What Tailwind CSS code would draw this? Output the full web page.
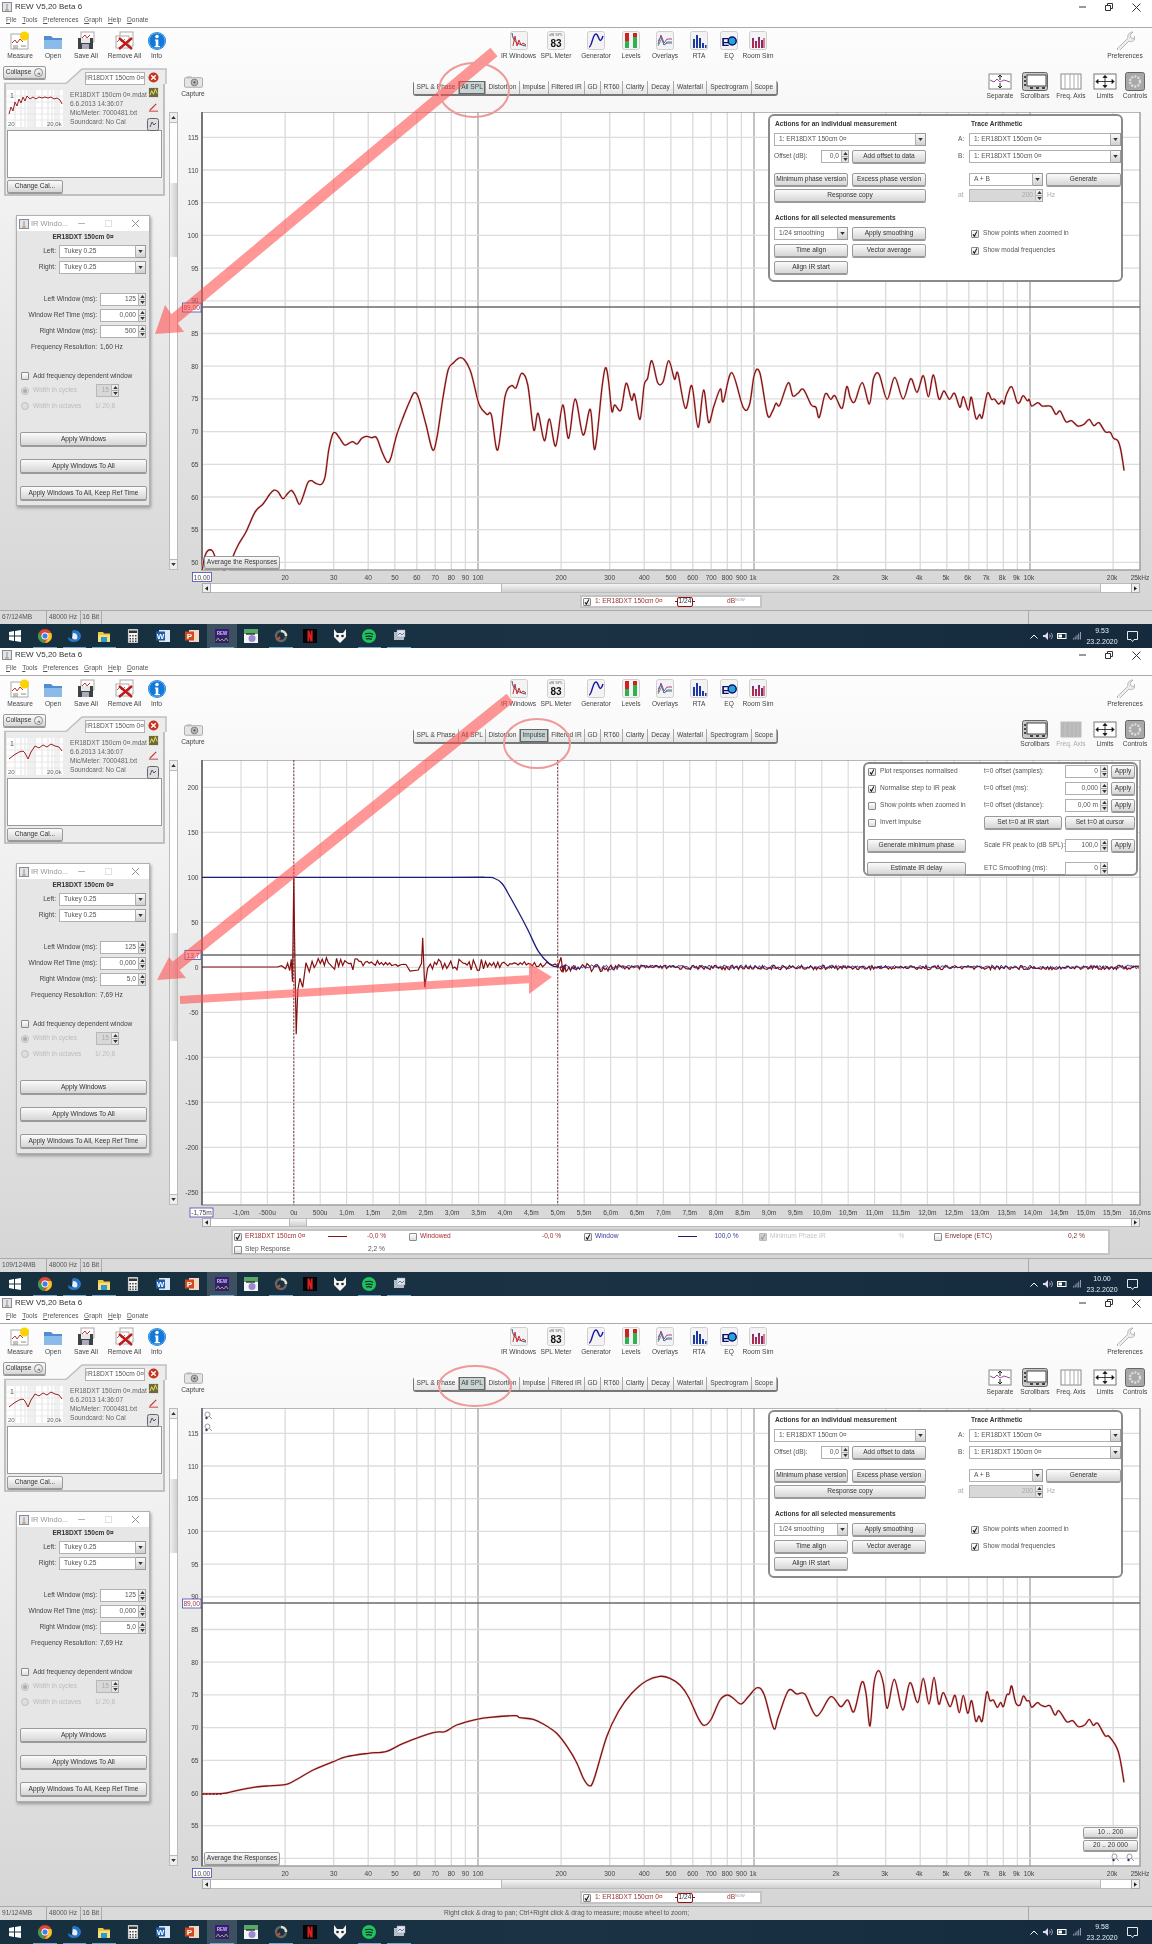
<!DOCTYPE html>
<html lang="en">

<head>
  <meta charset="UTF-8" />
  <meta name="viewport" content="width=device-width, initial-scale=1.0" />
  <script src="https://cdn.jsdelivr.net/npm/@tailwindcss/browser@4"></script>
  <title>REW V5,20 Beta 6</title>
</head>

<body class="bg-white">
  <div id="app" class="w-[1152px] h-[1944px] overflow-hidden blur-[0.3px] font-['Liberation_Sans',sans-serif] text-[6.6px] leading-none text-[#444]"></div>

  <script>
    // shared looks
    const BTN = "flex items-center justify-center rounded-[2px] border border-[#9a9a9a] bg-linear-to-b from-[#fbfbfb] to-[#d6d6d6] shadow-[0_1px_0_#999] text-[#333] whitespace-nowrap";
    const FIELD = "flex items-center bg-white border border-[#b0b0b0] text-[#555] whitespace-nowrap";
    const tri = (up) => `<svg viewBox="0 0 6 4" width="5" height="3"><path d="${up ? 'M0 4L3 0L6 4Z' : 'M0 0L3 4L6 0Z'}" fill="#333"/></svg>`;

    function btn(label, size, extra = "") {
      return `<div class="${BTN} ${size} ${extra}">${label}</div>`;
    }
    function combo(text, size) {
      return `<div class="flex h-[13px] ${size}"><div class="${FIELD} flex-1 pl-[4px]">${text}</div><div class="flex w-[10px] items-center justify-center border border-l-0 border-[#9a9a9a] bg-linear-to-b from-[#fafafa] to-[#d0d0d0]">${tri(false)}</div></div>`;
    }
    function spin(val, size, off) {
      const field = off ? "flex flex-1 items-center justify-end pr-[2px] bg-[#d8d8d8] border border-[#b8b8b8] text-[#aaa]"
        : "flex flex-1 items-center justify-end pr-[2px] bg-white border border-[#b0b0b0] text-[#555]";
      return `<div class="flex h-[13px] ${size}"><div class="${field}">${val}</div><div class="flex w-[7px] flex-col"><div class="flex flex-1 items-center justify-center border border-l-0 border-[#aaa] bg-[#eee]">${tri(true)}</div><div class="flex flex-1 items-center justify-center border border-l-0 border-t-0 border-[#aaa] bg-[#e4e4e4]">${tri(false)}</div></div></div>`;
    }
    function cb(on, off) {
      const box = off ? "flex h-[8px] w-[8px] shrink-0 items-center justify-center rounded-[1px] border border-[#bbb] bg-[#ccc]"
        : "flex h-[8px] w-[8px] shrink-0 items-center justify-center rounded-[1px] border border-[#8a8a8a] bg-linear-to-b from-[#fff] to-[#ddd]";
      const tick = on ? `<svg viewBox="0 0 8 8" width="8" height="8"><path d="M1.5 4.5L3.2 7L6.5 .5" fill="none" stroke="${off ? '#999' : '#111'}" stroke-width="1.4"/></svg>` : "";
      return `<div class="${box}">${tick}</div>`;
    }
    const radio = (on) => `<div class="flex h-[8px] w-[8px] items-center justify-center rounded-full border border-[#c0c0c0] bg-[#ddd]">${on ? '<div class="h-[4px] w-[4px] rounded-full bg-[#aaa]"></div>' : ''}</div>`;

    // toolbar icons, drawn on a 20x19 box
    const frame = '<rect x="1.5" y=".5" width="17" height="18" rx="2" fill="#f3f3f3" stroke="#cfcfcf"/>';
    const ICONS = {
      measure: '<rect x="1" y="3" width="17" height="15" fill="#fff" stroke="#aaa"/><path d="M2 12l3-3 2 3 3-4 3 3" fill="none" stroke="#c33"/><path d="M3 15h5M3 17h5M11 15h5" stroke="#888"/><circle cx="14.5" cy="5" r="4.5" fill="#fbd400"/>',
      open: '<path d="M1 5h7l2 2h9v10a1 1 0 0 1-1 1H2a1 1 0 0 1-1-1Z" fill="#4f8fd0"/><path d="M1 9h18v8a1 1 0 0 1-1 1H2a1 1 0 0 1-1-1Z" fill="#8abbe9"/>',
      save: '<rect x="5" y="1" width="13" height="10" fill="#fff" stroke="#aaa"/><path d="M6 7l3-3 2 3 3-3" fill="none" stroke="#c33"/><path d="M2 7h15v11H2Z" fill="#3c4148"/><rect x="5" y="7" width="9" height="5" fill="#e8e8e8"/><rect x="6" y="13" width="7" height="5" fill="#aab"/>',
      remove: '<rect x="5" y="1" width="13" height="14" fill="#fff" stroke="#aaa"/><rect x="1" y="5" width="13" height="12" fill="#fff" stroke="#aaa"/><path d="M2 11l3-3 2 3 3-3" fill="none" stroke="#c55"/><path d="M4 7L17 18M17 7L4 18" stroke="#c01818" stroke-width="2.4"/>',
      info: '<circle cx="10" cy="10" r="9" fill="#1379d8"/><circle cx="10" cy="10" r="8" fill="none" stroke="#7cc0f5" stroke-width=".7"/><circle cx="10" cy="5.5" r="1.8" fill="#fff"/><path d="M8 8.5h3.3v6.5H13v1.3H7.5V15h1.2V9.8H8Z" fill="#fff"/>',
      ir: frame + '<path d="M3 2c1 8 4 11 14 13" fill="none" stroke="#447"/><path d="M4 15L6 5l2 10 2-6 2 5 2-2 3 2" fill="none" stroke="#c33"/>',
      spl: frame + '<text x="10" y="5" text-anchor="middle" font-size="4" fill="#666">dB SPL</text><text x="10" y="15.5" text-anchor="middle" font-size="10" font-weight="700" fill="#111">83</text>',
      gen: frame + '<path d="M3 16C6 16 6.5 3 10 3C13 3 13 16 17 5" fill="none" stroke="#1a1aa8" stroke-width="1.5"/>',
      levels: frame + '<rect x="4" y="2" width="4" height="8" fill="#d02020"/><rect x="4" y="10" width="4" height="7" fill="#30b050"/><rect x="12" y="2" width="4" height="4" fill="#d02020"/><rect x="12" y="6" width="4" height="11" fill="#30b050"/>',
      overlays: frame + '<path d="M3 13L6 4l3 8 3-4h5" fill="none" stroke="#b43c8c"/><path d="M3 15L7 7l2 7 3-3h5" fill="none" stroke="#4a9a6a"/><path d="M3 10L6 6l3 8 3-2h5" fill="none" stroke="#5a6ab8"/>',
      rta: frame + '<path d="M4 17v-9h2v9ZM7 17V4h2v13ZM10 17V7h2v10ZM13 17v-5h2v5ZM16 17v-3h1.5v3Z" fill="#1c3aa0"/>',
      eq: frame + '<text x="2.5" y="14.5" font-size="11.5" font-weight="700" fill="#08106e">E</text><circle cx="13.2" cy="10" r="4" fill="#25a5d8" stroke="#08106e" stroke-width="1.5"/>',
      room: frame + '<path d="M4 17V7h2v10ZM7 17v-7h2v7ZM10 17V6h2v11ZM13 17v-8h2v8Z" fill="#7a2a80"/><path d="M5 17V9M8 17v-5M11 17V9M16 17V7" stroke="#c33" stroke-width="1.2"/>',
      pref: '<path d="M2 18L13 7c-1-3 1-6 5-6l-3 3 1 3 3 1 1-3c1 4-3 7-6 5L4 20Z" fill="#eee" stroke="#a8a8a8" stroke-width=".8"/>',
    };
    const RIGHT = {
      separate: '<rect x="2" y="2" width="22" height="15" fill="#fff" stroke="#888"/><path d="M3 8l4 2 3-3 3 3 4-2 6 2" fill="none" stroke="#a0489a"/><path d="M13 3v5M13 11v5M11 5l2-2 2 2M11 14l2 2 2-2" fill="none" stroke="#222"/>',
      scroll: '<rect x=".5" y=".5" width="25" height="18" rx="2" fill="#c8c8c8" stroke="#666"/><rect x="5" y="3" width="19" height="11" fill="#fff" stroke="#444"/><path d="M2 4h2v2H2ZM2 8h2v2H2ZM2 12h2v2H2ZM8 15h3v2H8ZM14 15h3v2h-3ZM20 15h3v2h-3Z" fill="#444"/>',
      freq: '<rect x="3" y="2" width="20" height="15" fill="#fff" stroke="#888"/><path d="M7 2v15M12 2v15M16 2v15M20 2v15" stroke="#aaa"/>',
      freqOff: '<rect x="3" y="2" width="20" height="15" fill="#b8b8b8" stroke="#bbb"/><path d="M7 2v15M12 2v15M16 2v15M20 2v15" stroke="#c4c4c4"/>',
      limits: '<rect x="2" y="2" width="22" height="15" fill="#fff" stroke="#777"/><path d="M4 9.5h18M13 3.500v12M4 9.500l2-2v4ZM22 9.500l-2-2v4ZM13 3.500l-2 2h4ZM13 15.500l-2-2h4Z" fill="#111" stroke="#111" stroke-width=".8"/>',
      controls: '<rect x="3.500" y=".5" width="19" height="18" rx="2" fill="#a8a8a8" stroke="#666"/><circle cx="13" cy="9.500" r="5" fill="none" stroke="#ddd" stroke-width="2.400" stroke-dasharray="2 1.200"/>',
    };
    const TASK = [
      '<path d="M1 3l5-1v4.500H1ZM7 2l6-1v5.500H7ZM1 7.500h5V12l-5-1ZM7 7.500h6V13l-6-1Z" fill="#fff"/>',
      '<circle cx="7" cy="7" r="7" fill="#e0453a"/><path d="M7 14A7 7 0 0 1 1 3.500L5 10Z" fill="#2fa24b"/><path d="M7 14a7 7 0 0 0 6.200-10H7l3 5Z" fill="#f7c41f"/><circle cx="7" cy="7" r="3.200" fill="#3d80e8" stroke="#fff"/>',
      '<path d="M7 1c4 0 7 3 7 6s-3 6-7 6c-4 0-6-2-6-5 2 2 4 2 5 1S3 6 6 1Z" fill="#2876c8"/><path d="M6 4c4 0 5 3 4 6-2 1-4 0-5-1Z" fill="#e8eef6"/>',
      '<path d="M1 3h5l1 1.500h6V13H1Z" fill="#f0c838"/><path d="M1 6h12v7H1Z" fill="#f9dd77"/><rect x="4" y="8" width="6" height="5" fill="#2a9ad8"/>',
      '<rect x="2" y="0" width="10" height="14" fill="#f4f4f4" stroke="#555" stroke-width=".5"/><rect x="3" y="1.500" width="8" height="2.500" fill="#333"/><path d="M3.500 6h1.500v1.500H3.500ZM6.200 6h1.500v1.500H6.200ZM9 6h1.500v1.500H9ZM3.500 9h1.500v1.500H3.500ZM6.200 9h1.500v1.500H6.200ZM9 9h1.500v1.500H9ZM3.500 11.500h1.500V13H3.500ZM6.200 11.500h1.500V13H6.200ZM9 11.500h1.500V13H9Z" fill="#444"/>',
      '<rect x="3" y="1" width="11" height="12" fill="#dce8f6"/><rect x="0" y="2.500" width="9" height="9" fill="#1f5cae"/><text x="4.500" y="10" text-anchor="middle" font-size="8" font-weight="700" fill="#fff">W</text>',
      '<rect x="4" y="1" width="10" height="12" fill="#f4d8c8"/><rect x="0" y="2.500" width="9" height="9" fill="#d04a20"/><text x="4.500" y="10" text-anchor="middle" font-size="8" font-weight="700" fill="#fff">P</text>',
      '<rect x="0" y="0" width="14" height="14" fill="#3a1a78"/><text x="7" y="5.500" text-anchor="middle" font-size="4.500" font-weight="700" fill="#ccd">REW</text><path d="M1 12l2-3 2 3 2-2 2 2 2-3 2 3" fill="none" stroke="#7ac040"/>',
      '<rect x="0" y="0" width="14" height="14" fill="#f4f4f4"/><path d="M0 0h14v5H0Z" fill="#5aa868"/><path d="M2 5h9" stroke="#222" stroke-width="1.300"/><circle cx="8" cy="9.500" r="3.500" fill="#9a8ad0"/>',
      '<circle cx="7" cy="7" r="5" fill="none" stroke="#666" stroke-width="2.400"/><path d="M7 2a5 5 0 0 1 5 5" fill="none" stroke="#e0dccc" stroke-width="2.400"/><path d="M3 11l3-3" stroke="#c9502a" stroke-width="2"/>',
      '<rect x="0" y="0" width="14" height="14" fill="#050505"/><path d="M4.500 1.500h2l3 11h-2ZM4.500 1.500h1.800v11H4.500ZM7.800 1.500h1.800v11H7.800Z" fill="#d81f26"/>',
      '<path d="M1 0l3 4h6l3-4v8l-6 6-6-6Z" fill="#f4f4f4"/><circle cx="4.500" cy="7" r="1.300" fill="#222"/><circle cx="9.500" cy="7" r="1.300" fill="#222"/>',
      '<circle cx="7" cy="7" r="7" fill="#1ec45a"/><path d="M3 5c3-1 6-1 8 .5M3.500 7.500c3-.7 5-.7 7 .4M4 10c2-.5 4-.5 5.800.4" fill="none" stroke="#123" stroke-width="1.200"/>',
      '<rect x="2" y="3" width="10" height="8" fill="#aebccb"/><path d="M5 1h8v7H5Z" fill="#dfe6ee" stroke="#8a9aaa" stroke-width=".5"/><path d="M6 6l2-2 2 2 2-2" fill="none" stroke="#6a7a8a"/>',
    ];
    const RUNNING = [1, 2, 3, 7, 9, 12, 13];

    function taskbar(time) {
      const cells = TASK.map((svg, i) => {
        const active = i === 7;
        return `<div class="${i === 0 ? 'w-[30px]' : 'w-[29.5px]'} relative flex h-full items-center justify-center ${active ? 'bg-[#3d5060]' : ''}">
          <svg viewBox="0 0 14 14" width="14" height="14">${svg}</svg>
          ${RUNNING.includes(i) ? '<span class="absolute inset-x-[3px] bottom-0 h-[1.5px] bg-[#6fa8cf]"></span>' : ''}</div>`;
      }).join("");
      return `<div class="flex h-[24px] shrink-0 items-center bg-linear-to-r from-[#16303f] via-[#1a3244] to-[#152a3d] text-[#e8eef2]">
        ${cells}
        <div class="ml-auto flex h-full items-center pr-[7px]">
          <div class="flex w-[14px] justify-center"><svg viewBox="0 0 8 5" width="8" height="5"><path d="M.5 4.500L4 1l3.500 3.500" fill="none" stroke="#fff"/></svg></div>
          <div class="flex w-[13px] justify-center"><svg viewBox="0 0 10 8" width="10" height="8"><path d="M0 3h2l3-3v8L2 5H0Z" fill="#dde"/><path d="M6.500 2.500a2 2 0 0 1 0 3M8 1a4 4 0 0 1 0 6" fill="none" stroke="#dde" stroke-width=".7"/></svg></div>
          <div class="flex w-[15px] justify-center"><svg viewBox="0 0 10 6" width="10" height="6"><rect x=".5" y=".5" width="8.500" height="5" fill="none" stroke="#fff"/><rect x="1.500" y="1.500" width="3.500" height="3" fill="#fff"/></svg></div>
          <div class="flex w-[15px] justify-center"><svg viewBox="0 0 8 8" width="8" height="8"><path d="M.5 7.500V6M2.200 7.500V4.500M4 7.500V3M5.700 7.500V1.500M7.500 7.500V0" stroke="#99a" stroke-width="1"/></svg></div>
          <div class="flex w-[36px] flex-col items-center gap-[3.5px] text-[7px]"><span>${time}</span><span>23.2.2020</span></div>
          <div class="flex w-[25px] justify-center"><svg viewBox="0 0 11 11" width="11" height="11"><path d="M.5 .5h10v8H7L5.500 10.500 4 8.500H.5Z" fill="none" stroke="#fff" stroke-width=".9"/></svg></div>
        </div>
      </div>`;
    }

    function toolItem(label, icon, size, off) {
      return `<div class="${size} flex flex-col items-center">
        <svg viewBox="0 0 20 19" width="20" height="19">${icon}</svg>
        <span class="mt-[3px] whitespace-nowrap ${off ? 'text-[#aaa]' : ''}">${label}</span></div>`;
    }

    function toolbar() {
      return `<div class="flex h-[36px] shrink-0 pt-[3px]">
        ${toolItem("Measure", ICONS.measure, "w-[40px]")}
        ${toolItem("Open", ICONS.open, "w-[26px]")}
        ${toolItem("Save All", ICONS.save, "w-[40px]")}
        ${toolItem("Remove All", ICONS.remove, "w-[37px]")}
        ${toolItem("Info", ICONS.info, "w-[27px]")}
        <div class="w-[330px]"></div>
        ${toolItem("IR Windows", ICONS.ir, "w-[37px]")}
        ${toolItem("SPL Meter", ICONS.spl, "w-[38px]")}
        ${toolItem("Generator", ICONS.gen, "w-[42px]")}
        ${toolItem("Levels", ICONS.levels, "w-[28px]")}
        ${toolItem("Overlays", ICONS.overlays, "w-[40px]")}
        ${toolItem("RTA", ICONS.rta, "w-[28px]")}
        ${toolItem("EQ", ICONS.eq, "w-[32px]")}
        ${toolItem("Room Sim", ICONS.room, "w-[26px]")}
        <div class="w-[329px]"></div>
        ${toolItem("Preferences", ICONS.pref, "w-[50px]")}
      </div>`;
    }

    function thumb(points) {
      const grid = [8, 14, 18, 21, 23, 25, 27, 28, 35, 41, 45, 48, 50, 52].map(x => `<path d="M${x} 0v37" stroke="#e2e2e2"/>`).join("");
      const rows = [6, 12, 18, 24, 30].map(y => `<path d="M0 ${y}h56" stroke="#e8e8e8"/>`).join("");
      return `<svg viewBox="0 0 56 37" width="56" height="37" class="shrink-0 bg-white">${grid}${rows}
        <polyline points="${points}" fill="none" stroke="#9a2020" stroke-width="1"/>
        <text x="3" y="8" font-size="7" fill="#555">1</text><text x="1" y="36" font-size="6" fill="#666">20</text><text x="40" y="36" font-size="6" fill="#666">20,0k</text></svg>`;
    }

    function sidebar(c) {
      const spinRow = (label, val) => `<div class="flex items-center justify-end pr-[3px]"><span class="mr-[3px] text-[#444]">${label}</span>${spin(val, "w-[46px]")}</div>`;
      return `<div class="w-[169px] shrink-0">
        <div class="${BTN} ml-[3px] mt-[2px] h-[13px] w-[43px] gap-[3px]">Collapse<span class="flex h-[9px] w-[9px] items-center justify-center rounded-full border border-[#888] bg-[#eee] text-[6px]">«</span></div>
        <div class="relative ml-[4px] mt-[4px] h-[113px] w-[161px] border-2 border-t-0 border-[#c0c0c0] bg-[#ececec]">
          <svg class="absolute left-[-2px] top-[-15px]" width="163" height="16" viewBox="0 0 163 16"><path d="M0 15.500H62L78 1H162V16H0Z" fill="#ececec"/><path d="M0 15.500H62L78 1H162V16" fill="none" stroke="#c0c0c0" stroke-width="1.500"/></svg>
          <div class="${FIELD} absolute left-[79px] top-[-11px] h-[13px] w-[60px] justify-center text-[#336]">!R18DXT 150cm 0¤</div>
          <div class="absolute right-[3px] top-[-11px] flex w-[14px] flex-col items-center gap-[2px]">
            <svg viewBox="0 0 12 12" width="11" height="11"><circle cx="6" cy="6" r="5.500" fill="#c8321e"/><path d="M3.500 3.500l5 5M8.500 3.500l-5 5" stroke="#fff" stroke-width="1.500"/></svg>
            <svg class="mt-[2px]" viewBox="0 0 12 12" width="11" height="11"><rect x="1" y="1" width="10" height="10" fill="#6a6a3a"/><path d="M2 9l2-5 2 4 2-6 2 5" fill="none" stroke="#f4e060"/></svg>
            <svg class="mt-[2px]" viewBox="0 0 12 12" width="11" height="11"><path d="M1 10h10" stroke="#c33"/><path d="M2 9L9 2" stroke="#c33" stroke-width="1.200"/></svg>
            <svg class="mt-[3px]" viewBox="0 0 12 13" width="12" height="13"><rect x=".5" y=".5" width="11" height="12" rx="2" fill="#ddd" stroke="#666"/><path d="M3 9l2-5 2 3 2-2" fill="none" stroke="#557"/></svg>
          </div>
          <div class="flex pl-[1px] pt-[7px]">
            ${thumb(c.thumb)}
            <div class="ml-[7px] w-[78px] whitespace-nowrap text-[#666]">
              <div class="h-[9px] leading-[9px]">ER18DXT 150cm 0¤.mdat</div>
              <div class="h-[9px] leading-[9px]">6.6.2013 14:36:07</div>
              <div class="h-[9px] leading-[9px]">Mic/Meter: 7000481.txt</div>
              <div class="h-[9px] leading-[9px]">Soundcard: No Cal</div>
            </div>
          </div>
          <div class="ml-[1px] mt-[3px] h-[48px] w-[155px] border border-[#999] bg-white"></div>
          <div class="${BTN} ml-[1px] mt-[2px] h-[13px] w-[56px]">Change Cal...</div>
        </div>
        <div class="ml-[16px] mt-[19px] h-[291px] w-[134px] border border-[#b0b0b0] bg-[#e6e6e6] shadow-[1px_2px_3px_#999]">
          <div class="flex h-[15px] items-center bg-white text-[#999]">
            <svg class="ml-[2px]" viewBox="0 0 10 10" width="10" height="10"><rect x=".5" y=".5" width="9" height="9" fill="#dfe6f0" stroke="#889"/><path d="M5 2v6M3 8h4" stroke="#b85"/></svg>
            <span class="ml-[2px] w-[40px] whitespace-nowrap text-[7.5px]">IR Windo...</span>
            <svg class="ml-[6.5px]" viewBox="0 0 8 8" width="7" height="7"><path d="M0 4h8" stroke="#aaa"/></svg>
            <svg class="ml-[20px]" viewBox="0 0 8 8" width="7" height="7"><rect x=".5" y=".5" width="7" height="7" fill="none" stroke="#ddd"/></svg>
            <svg class="ml-[20.5px]" viewBox="0 0 8 8" width="7" height="7"><path d="M0 0l8 8M8 0L0 8" stroke="#888"/></svg>
          </div>
          <div class="mt-[3px] h-[8px] text-center font-bold text-[#333]">ER18DXT 150cm 0¤</div>
          <div class="mt-[3px] flex items-center justify-end pr-[3px]"><span class="mr-[3px]">Left:</span>${combo("Tukey 0.25", "w-[87px]")}</div>
          <div class="mt-[3px] flex items-center justify-end pr-[3px]"><span class="mr-[3px]">Right:</span>${combo("Tukey 0.25", "w-[87px]")}</div>
          <div class="h-[19px]"></div>
          ${spinRow("Left Window (ms):", "125")}
          <div class="h-[3px]"></div>
          ${spinRow("Window Ref Time (ms):", "0,000")}
          <div class="h-[3px]"></div>
          ${spinRow("Right Window (ms):", c.rightWin)}
          <div class="mt-[5px] flex h-[8px] items-center"><span class="w-[80px] text-right">Frequency Resolution:</span><span class="ml-[3px]">${c.res}</span></div>
          <div class="ml-[4px] mt-[20px] flex h-[10px] items-center">${cb(false)}<span class="ml-[4px]">Add frequency dependent window</span></div>
          <div class="ml-[4px] mt-[3px] flex h-[13px] items-center text-[#bbb]">${radio(true)}<span class="ml-[4px] w-[63px]">Width in cycles</span>${spin("15", "w-[23px]", true)}</div>
          <div class="ml-[4px] mt-[4px] flex h-[10px] items-center text-[#bbb]">${radio(false)}<span class="ml-[4px] w-[62px]">Width in octaves</span><span>1/ 20,8</span></div>
          <div class="${BTN} ml-[3px] mt-[21px] h-[14px] w-[127px]">Apply Windows</div>
          <div class="${BTN} ml-[3px] mt-[13px] h-[14px] w-[127px]">Apply Windows To All</div>
          <div class="${BTN} ml-[3px] mt-[13px] h-[14px] w-[127px]">Apply Windows To All, Keep Ref Time</div>
        </div>
      </div>`;
    }

    function tabs(active) {
      const list = [
        ["SPL &amp; Phase", "w-[45px]"], ["All SPL", "w-[27px]"], ["Distortion", "w-[34px]"], ["Impulse", "w-[29px]"],
        ["Filtered IR", "w-[36px]"], ["GD", "w-[16px]"], ["RT60", "w-[22px]"], ["Clarity", "w-[25px]"],
        ["Decay", "w-[26px]"], ["Waterfall", "w-[33px]"], ["Spectrogram", "w-[45px]"], ["Scope", "w-[24.5px]"],
      ];
      return `<div class="ml-[206px] mt-[17px] flex h-[13px] rounded-[2px] shadow-[0_1px_0_1px_#777]">` + list.map(([t, w]) =>
        `<div class="${w} flex items-center justify-center whitespace-nowrap border-r border-[#aaa] ${t === active ? 'bg-[#c6d4d4] shadow-[inset_0_0_0_1px_#666]' : 'bg-linear-to-b from-[#fff] to-[#e4e4e4]'}">${t}</div>`).join("") + `</div>`;
    }

    function header(c) {
      return `<div class="flex h-[48px] pl-[9px]">
        <div class="mt-[12px] flex w-[30px] flex-col items-center">
          <svg viewBox="0 0 20 12" width="19" height="12"><rect x=".5" y="1.500" width="19" height="10" rx="1" fill="#e4e4e4" stroke="#aaa"/><rect x="3" y="0" width="5" height="2" fill="#bbb"/><circle cx="11" cy="6.500" r="3.500" fill="#bbb" stroke="#777"/><circle cx="11" cy="6.500" r="1.200" fill="#556"/></svg>
          <span class="mt-[3px]">Capture</span>
        </div>
        ${tabs(c.tab)}
        <div class="ml-auto mr-[2px] mt-[8px] flex">
          <div class="flex w-[36px] flex-col items-center">${c.imp ? '' : `<svg viewBox="0 0 26 19" width="26" height="19">${RIGHT.separate}</svg><span class="mt-[1.500px]">Separate</span>`}</div>
          <div class="flex w-[34px] flex-col items-center"><svg viewBox="0 0 26 19" width="26" height="19">${RIGHT.scroll}</svg><span class="mt-[1.500px]">Scrollbars</span></div>
          <div class="flex w-[38px] flex-col items-center"><svg viewBox="0 0 26 19" width="26" height="19">${c.imp ? RIGHT.freqOff : RIGHT.freq}</svg><span class="mt-[1.500px] whitespace-nowrap ${c.imp ? 'text-[#aaa]' : ''}">Freq. Axis</span></div>
          <div class="flex w-[30px] flex-col items-center"><svg viewBox="0 0 26 19" width="26" height="19">${RIGHT.limits}</svg><span class="mt-[1.500px]">Limits</span></div>
          <div class="flex w-[30px] flex-col items-center"><svg viewBox="0 0 26 19" width="26" height="19">${RIGHT.controls}</svg><span class="mt-[1.500px]">Controls</span></div>
        </div>
      </div>`;
    }

    // traced curves: [x, y] in crop pixels of the reference, mapped to window pixels below
    const SPL_A = [[551, 748], [556, 715], [565, 693], [578, 692], [585, 710], [595, 745], [625, 745], [636, 705], [650, 672], [670, 635], [695, 575], [716, 552], [733, 525], [745, 511], [757, 515], [770, 536], [782, 522], [793, 511], [803, 525], [815, 553], [825, 530], [838, 488], [848, 482], [860, 490], [875, 493], [885, 470], [895, 390], [905, 345], [913, 338], [925, 355], [938, 375], [950, 370], [960, 365], [972, 372], [985, 355], [998, 349], [1012, 353], [1025, 353], [1040, 395], [1055, 427], [1065, 410], [1080, 345], [1100, 285], [1115, 245], [1128, 218], [1140, 235], [1160, 315], [1178, 390], [1190, 350], [1205, 240], [1220, 150], [1235, 128], [1252, 113], [1265, 120], [1280, 150], [1290, 190], [1305, 255], [1325, 283], [1338, 285], [1355, 390], [1375, 230], [1392, 197], [1405, 203], [1420, 160], [1437, 195], [1453, 330], [1465, 280], [1482, 362], [1496, 297], [1513, 378], [1532, 255], [1548, 355]];
    const SPL_B = [[226, 207], [245, 315], [262, 238], [273, 358], [290, 170], [298, 113], [305, 150], [313, 243], [320, 225], [335, 240], [347, 160], [360, 210], [367, 193], [380, 268], [390, 165], [398, 145], [408, 92], [422, 158], [435, 155], [448, 92], [462, 147], [470, 130], [488, 235], [503, 167], [518, 292], [531, 180], [543, 277], [555, 230], [571, 177], [578, 215], [598, 128], [625, 232], [640, 225], [652, 132], [665, 130], [683, 255], [695, 243], [703, 220], [712, 225], [732, 158], [743, 197], [755, 190], [768, 178], [787, 225], [798, 232], [806, 262], [820, 192], [833, 208], [843, 197], [860, 235], [871, 170], [880, 205], [890, 215], [908, 158], [925, 222], [935, 145], [948, 133], [967, 208], [985, 142], [1005, 207], [1023, 146], [1038, 187], [1053, 137], [1065, 200], [1077, 135], [1090, 207], [1102, 183], [1115, 208], [1127, 190], [1140, 232], [1148, 200], [1160, 240], [1167, 202], [1178, 265], [1187, 253], [1193, 262], [1205, 190], [1215, 208], [1222, 207], [1232, 222], [1240, 212], [1245, 222], [1250, 195], [1263, 170], [1275, 215], [1282, 217], [1290, 197], [1300, 212], [1305, 208], [1310, 228], [1325, 218], [1335, 228], [1345, 228], [1357, 230], [1368, 253], [1378, 243], [1392, 275], [1405, 272], [1420, 288], [1435, 283], [1447, 268], [1458, 287], [1470, 278], [1485, 305], [1497, 307], [1505, 325], [1515, 332], [1522, 360], [1530, 422]];
    const SMOOTH_A = [[36, 612], [100, 610], [130, 604], [190, 592], [230, 588], [285, 584], [310, 574], [370, 540], [430, 515], [470, 500], [535, 490], [590, 484], [640, 460], [730, 428], [765, 425], [800, 405], [860, 388], [900, 382], [975, 377], [990, 383], [1030, 388], [1060, 402], [1100, 430], [1135, 475], [1160, 518], [1180, 565], [1197, 587], [1212, 568], [1250, 440], [1285, 365], [1325, 310], [1370, 272], [1410, 259]];
    const SMOOTH_B = [[0, 265], [30, 285], [55, 320], [85, 385], [102, 406], [122, 390], [150, 330], [172, 315], [190, 325], [213, 342], [235, 320], [262, 293], [283, 315], [311, 415], [325, 380], [355, 302], [380, 312], [405, 313], [440, 378], [482, 320], [512, 350], [533, 330], [552, 365], [575, 277], [588, 310], [600, 408], [612, 280], [626, 242], [640, 280], [652, 355], [673, 268], [698, 360], [720, 278], [743, 338], [760, 265], [777, 342], [792, 262], [806, 342], [820, 308], [840, 350], [855, 316], [868, 368], [880, 316], [893, 370], [905, 332], [917, 393], [927, 378], [937, 392], [950, 307], [960, 332], [970, 330], [982, 352], [992, 337], [1000, 350], [1010, 315], [1018, 312], [1025, 288], [1037, 338], [1050, 345], [1060, 318], [1070, 332], [1078, 333], [1085, 352], [1102, 338], [1112, 345], [1125, 350], [1140, 347], [1155, 375], [1167, 362], [1190, 395], [1208, 392], [1225, 410], [1245, 404], [1258, 388], [1270, 406], [1283, 400], [1305, 437], [1318, 440], [1345, 485], [1362, 577]];

    function smooth(pts) {
      let d = `M${pts[0][0].toFixed(1)} ${pts[0][1].toFixed(1)}`;
      for (let i = 0; i < pts.length - 1; i++) {
        const p0 = pts[i - 1] || pts[i], p1 = pts[i], p2 = pts[i + 1], p3 = pts[i + 2] || p2;
        const c1 = [p1[0] + (p2[0] - p0[0]) / 6, p1[1] + (p2[1] - p0[1]) / 6];
        const c2 = [p2[0] - (p3[0] - p1[0]) / 6, p2[1] - (p3[1] - p1[1]) / 6];
        d += `C${c1[0].toFixed(1)} ${c1[1].toFixed(1)} ${c2[0].toFixed(1)} ${c2[1].toFixed(1)} ${p2[0].toFixed(1)} ${p2[1].toFixed(1)}`;
      }
      return d;
    }
    const trace = (d) => `<path d="${d}" fill="none" stroke="#f8d4d4" stroke-width="2.400"/><path d="${d}" fill="none" stroke="#7e1616" stroke-width="1.300"/>`;
    const label = (x, y, t, anchor = "middle") => `<text x="${x}" y="${y}" text-anchor="${anchor}" fill="#444">${t}</text>`;
    const magnifier = (x, y) => `<g transform="translate(${x} ${y})"><circle cx="-1.500" cy="-1.500" r="2.500" fill="#fff" stroke="#99a"/><path d="M0 0l3 3" stroke="#99a"/><circle cx="-2.500" cy="2" r="1.200" fill="#246"/></g>`;

    function splPlot(c) {
      const X = (f) => 202 + 276 * Math.log10(f / 10);
      const Y = (db) => 137.3 + (115 - db) * 6.54;
      let grid = "", text = "";
      [20, 30, 40, 50, 60, 70, 80, 90, 100, 200, 300, 400, 500, 600, 700, 800, 900, 1000, 2000, 3000, 4000, 5000, 6000, 7000, 8000, 9000, 10000, 20000].forEach(f => {
        const heavy = f === 100 || f === 1000 || f === 10000;
        grid += `<path d="M${X(f).toFixed(1)} 112V570" stroke="${heavy ? '#b4b4b4' : '#dadada'}" stroke-width="${heavy ? 1.6 : 1.3}"/>`;
        const name = f >= 1000 ? (f / 1000) + "k" : f;
        text += label((X(f) - (f >= 1000 ? 1 : 0)).toFixed(1), 579.5, name);
      });
      text += label(1140, 579.5, "25kHz");
      for (let db = 50; db <= 115; db += 5) {
        grid += `<path d="M202 ${Y(db).toFixed(1)}H1140" stroke="#dcdcdc" stroke-width="1.300"/>`;
        text += label(198.5, (Y(db) + 2.5).toFixed(1), db, "end");
      }
      const curve = c.curve === "a"
        ? smooth([...SPL_A.map(([x, y]) => [x * .3673, 320 + y / 3]), ...SPL_B.map(([x, y]) => [480 + x * .421, 330 + y / 3])])
        : smooth([...SMOOTH_A.map(([x, y]) => [190 + x / 3, 294 + y / 3]), ...SMOOTH_B.map(([x, y]) => [670 + x / 3, 294 + y / 3])]);
      let dots = "";
      if (c.curve === "b") {
        for (let i = 0; i < 6; i++) dots += `<circle cx="${203 + i * 3.5}" cy="498" r="1" fill="#861c1c"/>`;
        dots += magnifier(209, 120) + magnifier(209, 132) + magnifier(1116, 562) + magnifier(1131, 562);
      }
      return `<svg viewBox="178 112 974 471" width="974" height="471">
        <rect x="202" y="112" width="938" height="458" fill="#fff"/>${grid}
        <path d="M202 112H1140V570H202Z" fill="none" stroke="#a0a0a0" stroke-width="1.500"/>
        <path d="M202 307H1140" stroke="#6a6a6a" stroke-width="1.300"/><path d="M202 112V570" stroke="#666" stroke-width="1.600"/>
        ${text}${trace(curve)}${dots}
        <rect x="182.500" y="303" width="18.500" height="9" fill="#fff" stroke="#4848b0" stroke-width=".8"/>${label(191.7, 310, "89,00").replace('#444', '#934')}
        <rect x="192.500" y="572.500" width="19" height="9" fill="#fff" stroke="#4848b0" stroke-width=".8"/>${label(202, 579.5, "10,00")}
      </svg>`;
    }

    function noise(i) {
      const s = Math.sin(i * 12.9898) * 43758.5453;
      return s - Math.floor(s) - .5;
    }

    function impulsePlot() {
      const X = (t) => 293.8 + 52.8 * t;
      const Y = (v) => 319.3 - v * .9;
      let grid = "", text = "";
      for (let t = -1; t <= 15.5; t += .5) {
        grid += `<path d="M${X(t).toFixed(1)} 112V557" stroke="#dcdcdc" stroke-width="1.200"/>`;
        const name = Math.abs(t) < 1 && t !== 0 ? (t * 1000) + "u" : t === 0 ? "0u" : t.toFixed(1).replace(".", ",") + "m";
        text += label(X(t).toFixed(1), 566.5, name);
      }
      text += label(1140, 566.5, "16,0ms");
      for (let v = -250; v <= 200; v += 50) {
        grid += `<path d="M202 ${Y(v)}H1140" stroke="#dcdcdc" stroke-width="1.200"/>`;
        text += label(198.5, Y(v) + 2.5, v, "end");
      }
      // measured impulse, crop pixels again, with the small ripple filled in
      const m = ([x, y]) => [x * .408, y / 3 - 8];
      let red = [[495, 981], [680, 981], [690, 977], [700, 986], [705, 970], [710, 992], [714, 958], [717, 1025], [720, 712], [722, 900], [726, 1183], [730, 1050], [735, 1015], [742, 1042], [750, 968], [758, 995]];
      for (let z = 765; z < 1000; z += 5) red.push([z, 974 - (1000 - z) / 60 + noise(z) * 36 * Math.min(1, (1000 - z) / 90)]);
      red.push([1005, 993], [1025, 990], [1033, 970], [1036, 893], [1041, 1042], [1048, 985], [1055, 972]);
      for (let z = 1060; z < 1365; z += 5) red.push([z, 974 + noise(z) * (z < 1200 ? 34 : 18)]);
      red.push([1368, 978], [1375, 952], [1380, 997], [1386, 975]);
      const line = red.map(m);
      const blue = [[495, 712], [1100, 712], [1190, 712], [1210, 714], [1230, 730], [1250, 770], [1290, 860], [1320, 935], [1350, 975], [1370, 981]].map(m);
      let blueTail = "";
      for (let x = 560, i = 0; x <= 1140; x += 1.5, i++) {
        blueTail += `${x},${(319 + noise(i + 3) * (x < 620 ? 6 : 3.6)).toFixed(1)} `;
        line.push([x, 319.5 + noise(i + 9) * (x < 620 ? 8 : 4.5)]);
      }
      const pts = line.map(p => p.map(n => n.toFixed(1)).join(",")).join(" ");
      return `<svg viewBox="178 112 974 458" width="974" height="458">
        <rect x="202" y="112" width="938" height="445" fill="#fff"/>${grid}
        <path d="M202 112H1140V557H202Z" fill="none" stroke="#a0a0a0" stroke-width="1.500"/>
        <path d="M202 307H1140" stroke="#6a6a6a" stroke-width="1.300"/><path d="M202 112V557" stroke="#666" stroke-width="1.600"/>
        ${text}
        <path d="M293.800 112V557M557.700 112V557" stroke="#7a3a3a" stroke-width="1" stroke-dasharray="2 1.500"/>
        <polyline points="${pts}" fill="none" stroke="#841010" stroke-width="1.200"/>
        <path d="${smooth(blue)}" fill="none" stroke="#1c1c7c" stroke-width="1.300"/>
        <polyline points="${blueTail}" fill="none" stroke="#2a2a90" stroke-width=".9"/>
        <rect x="185" y="302.500" width="16" height="9" fill="#fff" stroke="#4848b0" stroke-width=".8"/>${label(193, 309.5, "13,7").replace('#444', '#934')}
        <rect x="190" y="560" width="23" height="9" fill="#fff" stroke="#4848b0" stroke-width=".8"/>${label(201.5, 567, "-1,75m")}
      </svg>`;
    }

    function splPanel() {
      return `<div class="absolute left-[590px] top-[2px] flex h-[168px] w-[355px] rounded-md border-2 border-[#8a8a8a] bg-white pl-[4px] pr-[3px] text-[#555]">
        <div class="flex w-[152px] flex-col">
          <div class="mt-[5px] h-[8px] pl-[1px] font-bold text-[#333]">Actions for an individual measurement</div>
          <div class="mt-[4px]">${combo("1: ER18DXT 150cm 0¤", "w-[152px]")}</div>
          <div class="mt-[4px] flex h-[13px] items-center"><span class="w-[47px]">Offset (dB):</span>${spin("0,0", "w-[28px]")}<div class="${BTN} ml-[3px] h-[13px] w-[74px]">Add offset to data</div></div>
          <div class="mt-[10px] flex gap-[4px]">${btn("Minimum phase version", "h-[13px] w-[74px]")}${btn("Excess phase version", "h-[13px] w-[74px]")}</div>
          <div class="mt-[3px]">${btn("Response copy", "h-[13px] w-[152px]")}</div>
          <div class="mt-[13px] h-[8px] pl-[1px] font-bold text-[#333]">Actions for all selected measurements</div>
          <div class="mt-[4px] flex gap-[4px]">${combo("1/24 smoothing", "w-[74px]")}${btn("Apply smoothing", "h-[13px] w-[74px]", "from-[#f4fbfa] to-[#cfe2df]")}</div>
          <div class="mt-[4px] flex gap-[4px]">${btn("Time align", "h-[13px] w-[74px]")}${btn("Vector average", "h-[13px] w-[74px]")}</div>
          <div class="mt-[4px]">${btn("Align IR start", "h-[13px] w-[74px]")}</div>
        </div>
        <div class="ml-[32px] flex w-[163px] flex-col">
          <div class="mt-[5px] h-[8px] pl-[13px] font-bold text-[#333]">Trace Arithmetic</div>
          <div class="mt-[4px] flex items-center"><span class="w-[11px]">A:</span>${combo("1: ER18DXT 150cm 0¤", "w-[152px]")}</div>
          <div class="mt-[4px] flex items-center"><span class="w-[11px]">B:</span>${combo("1: ER18DXT 150cm 0¤", "w-[152px]")}</div>
          <div class="ml-[11px] mt-[10px] flex gap-[3px]">${combo("A + B", "w-[74px]")}${btn("Generate", "h-[13px] w-[75px]")}</div>
          <div class="mt-[3px] flex items-center text-[#aaa]"><span class="w-[11px]">at</span>${spin("200", "w-[74px]", true)}<span class="ml-[4px]">Hz</span></div>
          <div class="ml-[13px] mt-[25px] flex h-[13px] items-center">${cb(true)}<span class="ml-[4px]">Show points when zoomed in</span></div>
          <div class="ml-[13px] mt-[4px] flex h-[13px] items-center">${cb(true)}<span class="ml-[4px]">Show modal frequencies</span></div>
        </div>
      </div>`;
    }

    function impPanel() {
      const apply = btn("Apply", "h-[13px] w-[24px]", "ml-[3px]");
      const row = (top, on, name, text, val) => `<div class="${top} flex h-[13px] items-center">
        <div class="flex w-[117px] items-center pl-[1px]">${cb(on)}<span class="ml-[4px]">${name}</span></div>
        <span class="w-[81px] whitespace-nowrap">${text}</span>${spin(val, "w-[43px]")}${apply}</div>`;
      return `<div class="absolute left-[685px] top-[2px] h-[114px] w-[275px] rounded-md border-2 border-[#8a8a8a] bg-white pl-[2px] text-[#555]">
        ${row("mt-[1px]", true, "Plot responses normalised", "t=0 offset (samples):", "0")}
        ${row("mt-[4px]", true, "Normalise step to IR peak", "t=0 offset (ms):", "0,000")}
        ${row("mt-[4px]", false, "Show points when zoomed in", "t=0 offset (distance):", "0,00 m")}
        <div class="mt-[4px] flex h-[13px] items-center">
          <div class="flex w-[117px] items-center pl-[1px]">${cb(false)}<span class="ml-[4px]">Invert impulse</span></div>
          ${btn("Set t=0 at IR start", "h-[13px] w-[78px]")}${btn("Set t=0 at cursor", "h-[13px] w-[70px]", "ml-[3px]")}
        </div>
        <div class="mt-[10px] flex h-[13px] items-center">
          <div class="w-[117px]">${btn("Generate minimum phase", "h-[13px] w-[99px]")}</div>
          <span class="w-[81px] whitespace-nowrap">Scale FR peak to (dB SPL):</span>${spin("100,0", "w-[43px]")}${apply}
        </div>
        <div class="mt-[10px] flex h-[13px] items-center">
          <div class="w-[117px]">${btn("Estimate IR delay", "h-[13px] w-[99px]")}</div>
          <span class="w-[81px] whitespace-nowrap">ETC Smoothing (ms):</span>${spin("0", "w-[43px]")}
        </div>
      </div>`;
    }

    const hscrollBtn = (dir) => `<div class="flex w-[9px] items-center justify-center border border-[#aaa] bg-[#eee]"><svg viewBox="0 0 4 6" width="3" height="5"><path d="${dir === 'l' ? 'M4 0L0 3L4 6Z' : 'M0 0L4 3L0 6Z'}" fill="#222"/></svg></div>`;
    const thumbBar = "bg-linear-to-b from-[#f4f4f4] to-[#d0d0d0] border-x border-[#bbb]";

    function legendSpl() {
      return `<div class="ml-[411px] mt-[2px] flex h-[13px] w-[182px] items-center border-2 border-[#c4c4c4] bg-white text-[#9a3030]">
        <div class="ml-[1px]">${cb(true)}</div><span class="ml-[4px] w-[80px] whitespace-nowrap">1: ER18DXT 150cm 0¤</span>
        <span class="h-[1px] w-[2px] bg-[#8a1414]"></span>
        <span class="flex h-[10px] w-[16px] items-center justify-center rounded-[2px] border border-[#8a1414] text-[#333]">1/24</span>
        <span class="h-[1px] w-[2px] bg-[#8a1414]"></span>
        <span class="ml-[32px]">dB<sup class="text-[4px] text-[#99b]">NOW</sup></span>
      </div>`;
    }

    function legendImp() {
      const cell = (on, name, cls, swatch, val, off) => `<div class="flex h-[11px] items-center pl-[1px] ${cls}">${cb(on, off)}<span class="ml-[3px] w-[83px] whitespace-nowrap">${name}</span><span class="block h-[1.500px] w-[19px] ${swatch}"></span><span class="w-[59px] text-center">${val}</span></div>`;
      return `<div class="ml-[62px] mt-[2px] h-[26px] w-[879px] border-2 border-[#c4c4c4] bg-white">
        <div class="grid grid-cols-5 gap-y-[2px]">
          ${cell(true, "ER18DXT 150cm 0¤", "text-[#a03030]", "bg-[#8a1414]", "-0,0 %")}
          ${cell(false, "Windowed", "text-[#a03030]", "", "-0,0 %")}
          ${cell(true, "Window", "text-[#3a3a9a]", "bg-[#1c1c7c]", "100,0 %")}
          ${cell(true, "Minimum Phase IR", "text-[#c4c4c4]", "", "%", true)}
          ${cell(false, "Envelope (ETC)", "text-[#7a3030]", "", "0,2 %")}
          ${cell(false, "Step Response", "text-[#555]", "", "2,2 %")}
        </div>
      </div>`;
    }

    function arrows(c) {
      const ring = `<ellipse cx="${c.ring[0]}" cy="${c.ring[1]}" rx="${c.ring[2]}" ry="${c.ring[3]}" fill="none" stroke="#ee9a9a" stroke-width="2"/>`;
      let red = "";
      if (c.win === 1) red = '<path d="M494 52L173 320" stroke="#ff4d4d" stroke-width="11"/><path d="M155 334L184 332L165 305Z" fill="#ff4d4d"/>';
      if (c.win === 2) red = '<path d="M510 50L176 318" stroke="#ff4d4d" stroke-width="11"/><path d="M157 332L186 330L169 309Z" fill="#ff4d4d"/><path d="M180 352L532 331" stroke="#ff4d4d" stroke-width="8"/><path d="M552 329L529 315L529 346Z" fill="#ff4d4d"/>';
      return `<svg class="absolute inset-0 z-20 pointer-events-none" viewBox="0 0 1152 648" width="1152" height="648"><g opacity=".58">${red}</g>${ring}</svg>`;
    }

    function rewWindow(c) {
      const isImp = !!c.imp;
      const track = `<div class="flex flex-col ${isImp ? 'h-[445px]' : 'h-[458px]'} w-[9px] shrink-0 border border-[#bbb] bg-white">
        <div class="flex h-[10px] shrink-0 items-center justify-center border-b border-[#bbb] bg-[#eee]">${tri(true)}</div>
        <div class="${c.thumbClass} bg-linear-to-r from-[#f0f0f0] to-[#cfcfcf]"></div>
        <div class="flex-1"></div>
        <div class="flex h-[10px] shrink-0 items-center justify-center border-t border-[#bbb] bg-[#eee]">${tri(false)}</div>
      </div>`;
      const scroll = isImp
        ? `<div class="ml-[33px] flex h-[9px] w-[938px]">${hscrollBtn('l')}<div class="flex flex-1 border-y border-[#bbb] bg-white"><div class="ml-[78px] w-[18px] ${thumbBar}"></div></div>${hscrollBtn('r')}</div>`
        : `<div class="ml-[33px] flex h-[10px] w-[938px]">${hscrollBtn('l')}<div class="flex flex-1 border-y border-[#bbb] bg-white"><div class="ml-[290px] w-[600px] ${thumbBar}"></div></div>${hscrollBtn('r')}</div>`;
      const overlay = isImp ? impPanel() : splPanel()
        + `<div class="${BTN} absolute left-[26px] top-[444px] h-[13px] w-[76px]">Average the Responses</div>`
        + (c.curve === "b" ? `<div class="${BTN} absolute left-[905px] top-[419px] h-[11px] w-[55px]">10 .. 200</div><div class="${BTN} absolute left-[905px] top-[432px] h-[11px] w-[55px]">20 .. 20 000</div>` : "");
      return `<section class="relative flex h-[648px] w-[1152px] flex-col overflow-hidden">
        <div class="flex h-[14px] shrink-0 items-center bg-white pl-[2px]">
          <svg viewBox="0 0 10 10" width="10" height="10"><rect x=".5" y=".5" width="9" height="9" fill="#dfe6f0" stroke="#889"/><path d="M5 2v6M3 8h4" stroke="#b85"/></svg>
          <span class="ml-[3px] text-[8px] text-[#333]">REW V5,20 Beta 6</span>
          <div class="ml-auto flex items-center pr-[11px]">
            <svg viewBox="0 0 8 8" width="8" height="8"><path d="M0 4h7" stroke="#333"/></svg>
            <svg class="ml-[18px]" viewBox="0 0 8 8" width="8" height="8"><path d="M.5 2.500h5v5h-5ZM2.500 2.500v-2h5v5h-2" fill="none" stroke="#333"/></svg>
            <svg class="ml-[19px]" viewBox="0 0 9 9" width="9" height="9"><path d="M.5 .5l8 8M8.500 .5l-8 8" stroke="#333"/></svg>
          </div>
        </div>
        <div class="flex h-[14px] shrink-0 items-center gap-[5.500px] border-b border-[#aaa] bg-white pl-[6px] pb-[1px] text-[#555]">
          <span><u>F</u>ile</span><span><u>T</u>ools</span><span><u>P</u>references</span><span><u>G</u>raph</span><span><u>H</u>elp</span><span><u>D</u>onate</span>
        </div>
        <div class="flex flex-1 flex-col bg-linear-to-b from-[#fdfdfd] to-[#d6d6d6]">
          ${toolbar()}
          <div class="flex flex-1">
            ${sidebar(c)}
            <div class="flex-1">
              ${header(c)}
              <div class="relative flex">
                ${track}
                <div class="relative">${isImp ? impulsePlot() : splPlot(c)}${overlay}</div>
              </div>
              ${scroll}
              ${isImp ? legendImp() : legendSpl()}
            </div>
          </div>
        </div>
        <div class="flex h-[14px] shrink-0 items-center border-t border-[#aaa] bg-[#dadada] text-[#555]">
          <div class="flex h-full w-[46.500px] items-center border-r border-[#aaa] pl-[2px]">${c.mem}</div>
          <div class="flex h-full w-[34px] items-center justify-center border-r border-[#aaa]">48000 Hz</div>
          <div class="flex h-full w-[21.500px] items-center justify-center border-r border-[#aaa]">16 Bit</div>
          <div class="flex h-full w-[927px] items-center whitespace-nowrap border-r border-[#aaa] pl-[342px]">${c.hint || ""}</div>
        </div>
        ${taskbar(c.time)}
        ${arrows(c)}
      </section>`;
    }

    const JAGGED = "2,24 4,17 6,21 8,12 10,16 12,9 14,13 16,7 18,11 20,6 23,9 26,7 29,9 32,7 35,8 38,7 41,8 44,7 47,9 50,8 53,10 55,14";
    const DIPPED = "2,21 7,17 12,14 16,13 18,15 21,21 24,14 28,8 32,10 36,7 40,9 44,6 48,8 52,9 55,13";
    const app = document.getElementById("app");
    app.innerHTML = [
      { win: 1, tab: "All SPL", curve: "a", thumb: JAGGED, rightWin: "500", res: "1,60 Hz", mem: "67/124MB", time: "9.53", ring: [474, 90, 35, 27], thumbClass: "mt-[60px] h-[74px]" },
      { win: 2, imp: true, tab: "Impulse", thumb: DIPPED, rightWin: "5,0", res: "7,69 Hz", mem: "109/124MB", time: "10.00", ring: [537, 95.5, 33, 24.5], thumbClass: "mt-[162px] h-[108px]" },
      { win: 3, tab: "All SPL", curve: "b", thumb: DIPPED, rightWin: "5,0", res: "7,69 Hz", mem: "91/124MB", time: "9.58", ring: [475, 90, 36, 20], thumbClass: "mt-[60px] h-[74px]", hint: "Right click &amp; drag to pan; Ctrl+Right click &amp; drag to measure; mouse wheel to zoom;" },
    ].map(rewWindow).join("");
  </script>
</body>

</html>
